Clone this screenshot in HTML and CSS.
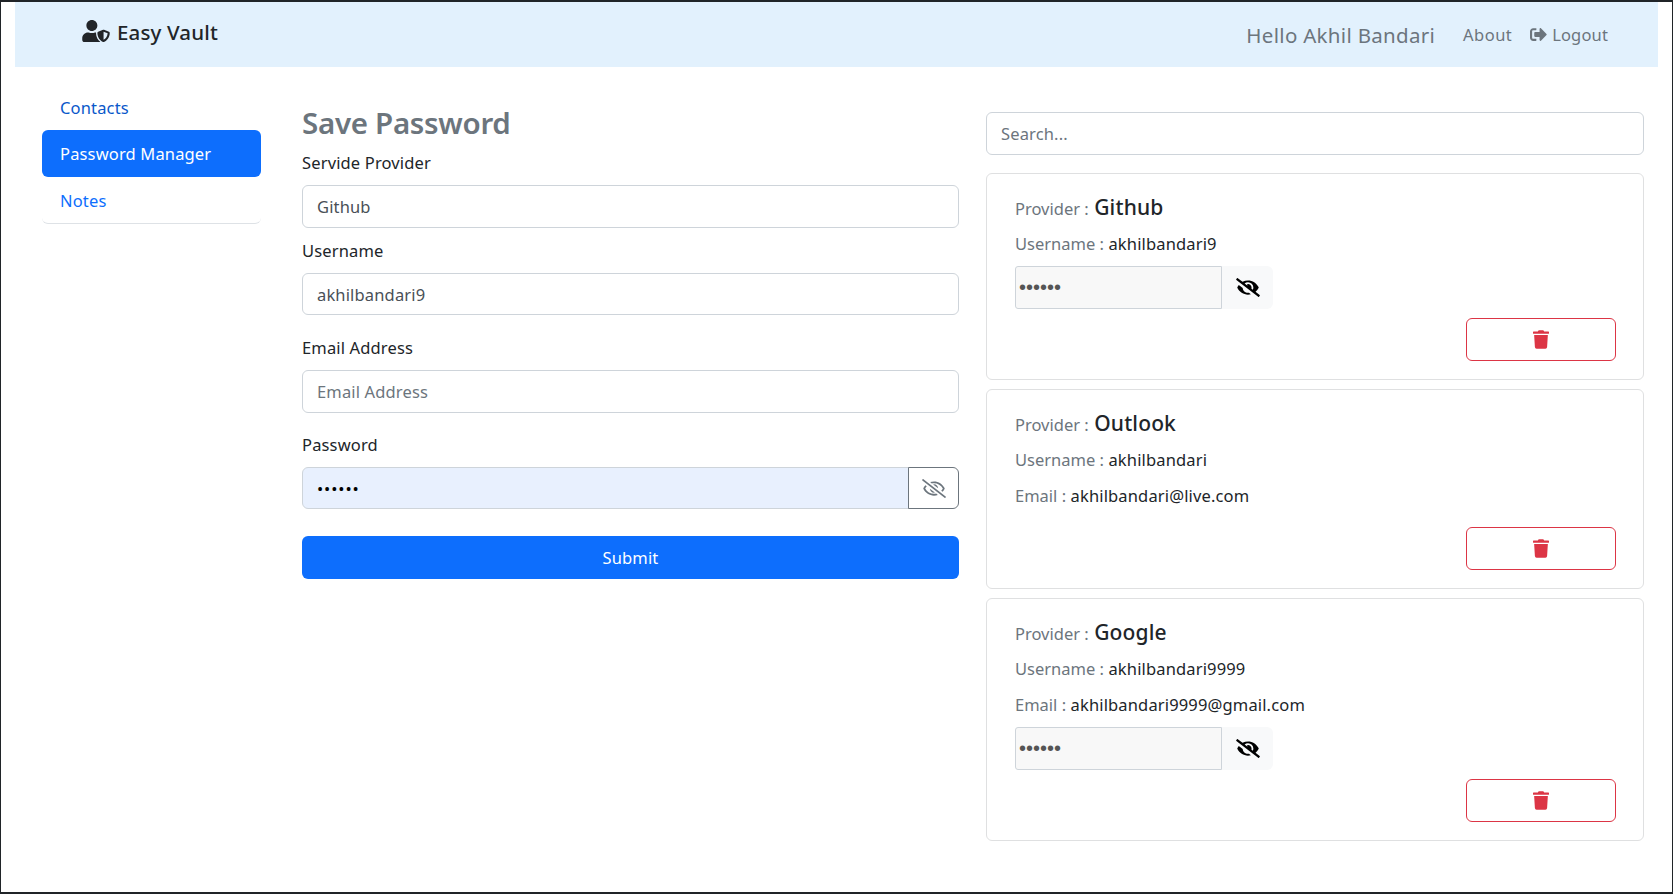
FILE: index.html
```html
<!DOCTYPE html>
<html lang="en">

<head>
    <meta charset="UTF-8">
    <meta name="viewport" content="width=device-width, initial-scale=1.0">
    <title>Easy Vault</title>
    <link rel="stylesheet" href="styles.css">
</head>

<body>
    <nav class="navbar">
        <a class="brand" href="#">
            <svg class="brand-icon" viewBox="0 0 640 512"><path d="M622.3 271.1l-115.2-45c-4.1-1.6-12.6-3.7-22.2 0l-115.2 45c-10.7 4.2-17.7 14-17.7 24.9 0 111.6 68.7 188.8 132.9 213.9 9.6 3.7 18 1.6 22.2 0C558.4 489.9 640 420.5 640 296c0-10.9-7-20.7-17.7-24.9zM496 462.4V273.3l95.5 37.3c-5.6 87.1-60.9 135.4-95.5 151.8zM224 256c70.7 0 128-57.3 128-128S294.7 0 224 0 96 57.3 96 128s57.3 128 128 128zm96 40c0-2.5.8-4.8 1.1-7.2-2.5-.1-4.9-.8-7.5-.8h-16.7c-22.2 10.2-46.9 16-72.9 16s-50.6-5.8-72.9-16h-16.7C60.2 288 0 348.2 0 422.4V464c0 26.5 21.5 48 48 48h352c6.8 0 13.3-1.5 19.2-4-54-42.9-99.2-116.7-99.2-212z"/></svg>
            Easy Vault
        </a>
        <div class="nav-right">
            <span class="hello">Hello Akhil Bandari</span>
            <a class="nav-link about" href="#">About</a>
            <a class="nav-link logout" href="#">
                <svg class="logout-icon" viewBox="0 0 512 512"><path d="M497 273L329 441c-15 15-41 4.5-41-17v-96H152c-13.3 0-24-10.7-24-24v-96c0-13.3 10.7-24 24-24h136V88c0-21.4 25.9-32 41-17l168 168c9.3 9.4 9.3 24.6 0 34zM192 436v-40c0-6.6-5.4-12-12-12H96c-17.7 0-32-14.3-32-32V160c0-17.7 14.3-32 32-32h84c6.6 0 12-5.4 12-12V76c0-6.6-5.4-12-12-12H96c-53 0-96 43-96 96v192c0 53 43 96 96 96h84c6.6 0 12-5.4 12-12z"/></svg>
                Logout
            </a>
        </div>
    </nav>

    <div class="content">
        <aside class="sidebar">
            <a class="side-item first" href="#">Contacts</a>
            <a class="side-item active" href="#">Password Manager</a>
            <a class="side-item last" href="#">Notes</a>
        </aside>

        <form class="save-form">
            <h2>Save Password</h2>
            <label class="form-label">Servide Provider</label>
            <input class="form-input first-input" type="text" value="Github">
            <label class="form-label">Username</label>
            <input class="form-input" type="text" value="akhilbandari9">
            <label class="form-label">Email Address</label>
            <input class="form-input email-input" type="text" placeholder="Email Address">
            <label class="form-label">Password</label>
            <div class="input-group">
                <input class="form-input autofilled" type="password" value="secret">
                <button class="toggle" type="button">
                    <svg class="eye-outline" viewBox="0 0 640 512"><path d="M634 471L36 3.51A16 16 0 0 0 13.51 6l-10 12.49A16 16 0 0 0 6 41l598 467.49a16 16 0 0 0 22.49-2.49l10-12.49A16 16 0 0 0 634 471zM296.79 146.47l134.79 105.38C429.36 191.91 380.48 144 320 144a112.26 112.26 0 0 0-23.21 2.47zm46.42 219.07L208.42 260.16C210.65 320.09 259.53 368 320 368a113 113 0 0 0 23.21-2.46zM320 112c98.65 0 189.09 55 237.93 144a285.53 285.53 0 0 1-44 60.2l37.74 29.5a333.7 333.7 0 0 0 52.9-75.11 32.35 32.35 0 0 0 0-29.19C550.29 135.59 442.93 64 320 64c-36.7 0-71.71 7-104.63 18.81l46.41 36.29c18.94-4.3 38.34-7.1 58.22-7.1zm0 288c-98.65 0-189.08-55-237.93-144a285.47 285.47 0 0 1 44.05-60.19l-37.74-29.5a333.6 333.6 0 0 0-52.89 75.1 32.35 32.35 0 0 0 0 29.19C89.72 376.41 197.08 448 320 448c36.7 0 71.71-7.05 104.63-18.81l-46.41-36.28C359.28 397.2 339.89 400 320 400z"/></svg>
                </button>
            </div>
            <button class="submit" type="submit">Submit</button>
        </form>

        <section class="saved">
            <input class="form-input search" type="text" placeholder="Search...">

            <div class="card">
                <div class="row provider"><span class="muted">Provider :</span> <b>Github</b></div>
                <div class="row"><span class="muted">Username :</span> akhilbandari9</div>
                <div class="pass-row">
                    <input class="pass-input" type="password" value="secret" readonly>
                    <button class="pass-toggle" type="button">
                        <svg class="eye-solid" viewBox="0 0 640 512"><use href="#eye-slash"/></svg>
                    </button>
                </div>
                <div class="card-actions">
                    <button class="delete" type="button"><svg class="trash" viewBox="0 0 448 512"><use href="#trash"/></svg></button>
                </div>
            </div>

            <div class="card">
                <div class="row provider"><span class="muted">Provider :</span> <b>Outlook</b></div>
                <div class="row"><span class="muted">Username :</span> akhilbandari</div>
                <div class="row"><span class="muted">Email :</span> akhilbandari@live.com</div>
                <div class="card-actions no-pass">
                    <button class="delete" type="button"><svg class="trash" viewBox="0 0 448 512"><use href="#trash"/></svg></button>
                </div>
            </div>

            <div class="card">
                <div class="row provider"><span class="muted">Provider :</span> <b>Google</b></div>
                <div class="row"><span class="muted">Username :</span> akhilbandari9999</div>
                <div class="row"><span class="muted">Email :</span> akhilbandari9999@gmail.com</div>
                <div class="pass-row">
                    <input class="pass-input" type="password" value="secret" readonly>
                    <button class="pass-toggle" type="button">
                        <svg class="eye-solid" viewBox="0 0 640 512"><use href="#eye-slash"/></svg>
                    </button>
                </div>
                <div class="card-actions">
                    <button class="delete" type="button"><svg class="trash" viewBox="0 0 448 512"><use href="#trash"/></svg></button>
                </div>
            </div>
        </section>
    </div>

    <svg class="icon-defs" width="0" height="0">
        <defs>
            <path id="eye-slash" d="M320 400c-75.85 0-137.25-58.71-142.9-133.11L72.2 185.82c-13.79 17.3-26.48 35.59-36.72 55.59a32.35 32.35 0 0 0 0 29.19C89.71 376.41 197.07 448 320 448c26.91 0 52.87-4 77.89-10.46L346 397.39a144.13 144.13 0 0 1-26 2.61zm313.82 58.1l-110.55-85.44a331.25 331.25 0 0 0 81.25-102.07 32.35 32.35 0 0 0 0-29.19C550.29 135.59 442.93 64 320 64a308.15 308.15 0 0 0-147.32 37.7L45.46 3.37A16 16 0 0 0 23 6.18L3.37 31.45A16 16 0 0 0 6.18 53.9l588.36 454.73a16 16 0 0 0 22.46-2.81l19.64-25.27a16 16 0 0 0-2.82-22.45zm-183.72-142l-39.3-30.38A94.75 94.75 0 0 0 416 256a94.76 94.76 0 0 0-121.31-92.21A47.65 47.65 0 0 1 304 192a46.64 46.64 0 0 1-1.54 10l-73.61-56.89A142.31 142.31 0 0 1 320 112a143.92 143.92 0 0 1 144 144c0 21.63-5.29 41.79-13.9 60.11z"/>
            <path id="trash" d="M432 32H312l-9.4-18.7A24 24 0 0 0 281.1 0H166.8a23.72 23.72 0 0 0-21.4 13.3L136 32H16A16 16 0 0 0 0 48v32a16 16 0 0 0 16 16h416a16 16 0 0 0 16-16V48a16 16 0 0 0-16-16zM53.2 467a48 48 0 0 0 47.9 45h245.8a48 48 0 0 0 47.9-45L416 128H32z"/>
        </defs>
    </svg>
</body>

</html>
```

FILE: styles.css
```css
* {
    box-sizing: border-box;
}

body {
    font-family: "Noto Sans", Arial, sans-serif;
    font-size: 16.5px;
    letter-spacing: .15px;
    line-height: 24px;
    color: #212529;
    background: white;
    margin: 0;
    height: 100vh;
    overflow: hidden;
    border-style: solid;
    border-color: #202428;
    border-width: 2px 1px 2px 1px;
    padding: 0 14px;
}

a {
    text-decoration: none;
}

.navbar {
    height: 65px;
    background: #e2f1fd;
    display: flex;
    align-items: center;
    justify-content: space-between;
    padding: 0 50px 0 67px;
}

.brand {
    display: flex;
    align-items: center;
    gap: 7px;
    font-size: 20.5px;
    font-weight: 500;
    color: #212529;
    margin-top: -5px;
}

.brand-icon {
    width: 28px;
    height: 22px;
    fill: #212529;
    margin-top: -2px;
}

.nav-right {
    display: flex;
    align-items: center;
}

.hello {
    font-size: 20.5px;
    letter-spacing: .3px;
    color: #6c757d;
    margin-right: 28px;
}

.nav-link {
    color: #6c757d;
}

.about {
    letter-spacing: .45px;
}

.logout {
    display: flex;
    align-items: center;
    gap: 5px;
    margin-left: 18px;
}

.logout-icon {
    width: 17px;
    height: 17px;
    fill: #6c757d;
}

.content {
    display: flex;
    padding-left: 27px;
}

.sidebar {
    width: 219px;
    margin-top: 16px;
    margin-right: 41px;
    flex: none;
}

.side-item {
    display: block;
    height: 47px;
    padding: 12px 18px;
    color: #0d6efd;
    border-radius: 6px;
}

.side-item.first {
    padding-top: 13px;
    color: #0a58ca;
}

.side-item.active {
    background: #0d6efd;
    color: white;
}

.side-item.last {
    border-bottom: 1px solid #dee2e6;
    border-radius: 0 0 6px 6px;
}

.save-form {
    width: 657px;
    flex: none;
    margin-top: 37px;
    margin-right: 27px;
}

h2 {
    font-size: 29.5px;
    letter-spacing: -.3px;
    line-height: 38px;
    font-weight: 600;
    color: #6c757d;
    margin: 0 0 9px;
}

.form-label {
    display: block;
    margin-bottom: 10px;
}

.form-input {
    display: block;
    width: 100%;
    height: 42px;
    padding: 6px 14px;
    font: inherit;
    letter-spacing: inherit;
    color: #495057;
    border: 1px solid #ced4da;
    border-radius: 6px;
    background: white;
    margin-bottom: 21px;
}

.form-input::placeholder {
    color: #6c757d;
}

.first-input {
    height: 43px;
    margin-bottom: 11px;
}

.email-input {
    height: 43px;
    margin-bottom: 20px;
}

.input-group {
    display: flex;
    margin-bottom: 27px;
}

.input-group .form-input {
    margin-bottom: 0;
    border-radius: 6px 0 0 6px;
}

.autofilled {
    background: #e8f0fe;
    color: black;
    letter-spacing: .9px;
}

.toggle {
    width: 51px;
    height: 42px;
    flex: none;
    margin-left: -1px;
    background: white;
    border: 1px solid #6c757d;
    border-radius: 0 6px 6px 0;
    display: flex;
    align-items: center;
    justify-content: center;
    padding: 0;
}

.eye-outline {
    width: 24px;
    height: 19px;
    fill: #6c757d;
}

.submit {
    display: block;
    width: 100%;
    height: 43px;
    font: inherit;
    letter-spacing: inherit;
    color: white;
    background: #0d6efd;
    border: none;
    border-radius: 6px;
}

.saved {
    width: 658px;
    flex: none;
    margin-top: 45px;
}

.search {
    height: 43px;
    margin-bottom: 18px;
}

.card {
    border: 1px solid #dfe0e1;
    border-radius: 6px;
    padding: 15px 27px 18px 28px;
    margin-bottom: 9px;
}

.row {
    height: 24px;
    margin-bottom: 12px;
}

.row .muted {
    letter-spacing: 0;
}

.provider {
    height: 36px;
    display: block;
    line-height: 36px;
    margin-bottom: 7px;
}

.muted {
    color: #6c757d;
}

.provider b {
    font-size: 21px;
    font-weight: 500;
    color: #212529;
    margin-left: 1px;
}

.pass-row {
    display: flex;
    margin-top: -2px;
    margin-bottom: 9px;
}

.pass-input {
    width: 207px;
    height: 43px;
    padding: 1px 3px;
    font-size: 20px;
    color: #555;
    background: #f8f8f8;
    border: 1px solid #ced4da;
    border-radius: 3px 0 0 3px;
}

.pass-toggle {
    width: 51px;
    height: 43px;
    background: #f8f9fa;
    border: none;
    border-radius: 0 6px 6px 0;
    display: flex;
    align-items: center;
    justify-content: center;
    padding: 0;
}

.eye-solid {
    width: 24px;
    height: 19px;
    fill: black;
}

.card-actions {
    display: flex;
    justify-content: flex-end;
}

.card-actions.no-pass {
    margin-top: 19px;
}

.delete {
    width: 150px;
    height: 43px;
    background: white;
    border: 1px solid #dc3545;
    border-radius: 6px;
    display: flex;
    align-items: center;
    justify-content: center;
    padding: 0;
}

.trash {
    width: 16px;
    height: 19px;
    fill: #dc3545;
}

.icon-defs {
    position: absolute;
}
```
